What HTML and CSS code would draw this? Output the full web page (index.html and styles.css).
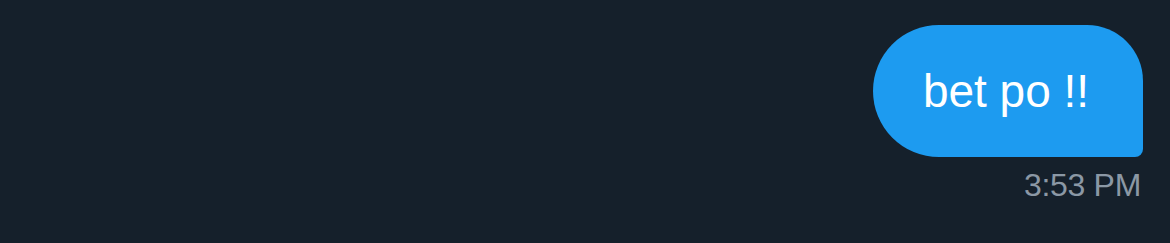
FILE: index.html
```html
<!DOCTYPE html>
<html lang="en">
<head>
    <meta charset="UTF-8">
    <title>Message</title>
    <link rel="stylesheet" href="styles.css">
</head>
<body>
    <div class="thread">
        <div class="message sent">
            <div class="bubble">bet po !!</div>
            <div class="time">3:53 PM</div>
        </div>
    </div>
</body>
</html>
```
FILE: styles.css
```css
body {
    margin: 0;
    padding: 0;
    background-color: #15202b;
    font-family: 'Liberation Sans', Arial, sans-serif;
    height: 243px;
    overflow: hidden;
}

.thread {
    display: flex;
    flex-direction: column;
    padding: 25px 27px 0 0;
}

.message {
    display: flex;
    flex-direction: column;
    align-items: flex-end;
}

.bubble {
    box-sizing: border-box;
    width: 270px;
    height: 132px;
    display: flex;
    justify-content: center;
    align-items: center;
    background-color: #1d9bf0;
    color: #fff;
    font-size: 46px;
    border-radius: 66px 56px 8px 66px;
    padding: 0 4px 0 0;
}

.time {
    margin-top: 10px;
    margin-right: 2px;
    color: #8b98a5;
    font-size: 32px;
    letter-spacing: -0.3px;
}
```
